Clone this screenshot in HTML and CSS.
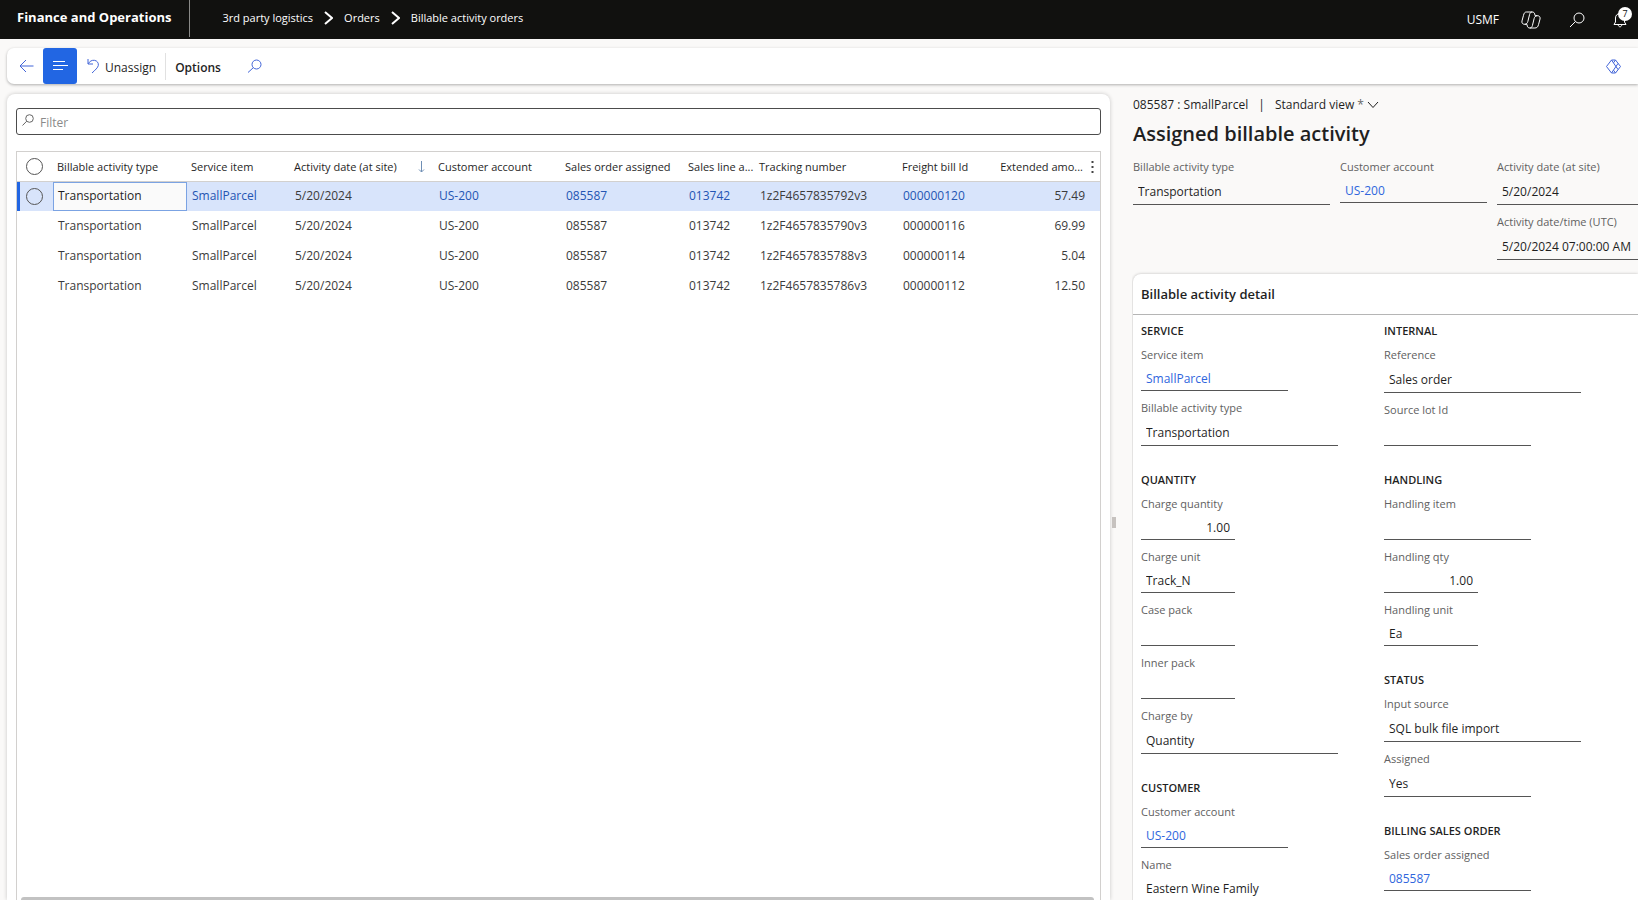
FILE: index.html
```html
<!DOCTYPE html>
<html lang="en">
<head>
    <meta charset="UTF-8">
    <meta name="viewport" content="width=device-width, initial-scale=1.0">
    <title>Billable activity orders</title>
    <link rel="stylesheet" href="styles.css">
</head>
<body>
    <header class="topbar">
        <a class="brand" href="#">Finance and Operations</a>
        <nav class="crumbs" aria-label="Breadcrumb">
            <a href="#">3rd party logistics</a>
            <svg width="9" height="14" viewBox="0 0 9 14"><path d="M1 1l7 6-7 6"/></svg>
            <a href="#">Orders</a>
            <svg width="9" height="14" viewBox="0 0 9 14"><path d="M1 1l7 6-7 6"/></svg>
            <a href="#">Billable activity orders</a>
        </nav>
        <div class="top-actions">
            <button class="company">USMF</button>
            <button aria-label="Copilot">
                <svg width="20" height="18" viewBox="0 0 20 18"><path d="M5.500 1h5.700c1.500 0 2.200.8 2.500 2l.4 1.700h2.200c2.200 0 3.200 1.500 2.700 3.400l-1.500 5.600c-.6 2.300-1.700 3.300-3.600 3.300H8.800c-1.500 0-2.200-.8-2.500-2l-.4-1.700H3.700c-2.200 0-3.200-1.500-2.700-3.400l1.500-5.600C3.100 2 3.800 1 5.500 1z"/><path d="M11.200 1C9.700 1 9 2 8.600 3.400L6.900 10.300c-.4 1.600-1.200 3-3.200 3M8.800 17c1.500 0 2.200-1 2.600-2.400l1.700-6.900c.4-1.600 1.200-3 3.200-3"/></svg>
            </button>
            <button aria-label="Search">
                <svg width="16" height="16" viewBox="0 0 16 16"><circle cx="10" cy="6" r="5"/><path d="M6.400 9.600L1 15"/></svg>
            </button>
            <button class="bell" aria-label="Notifications">
                <svg width="14" height="16" viewBox="0 0 14 16"><path d="M7 1.500C4.300 1.500 2.500 3.500 2.500 6v4L1 12.500h12L11.500 10V6C11.500 3.500 9.700 1.500 7 1.500zM5.200 13c.3 1.200 1 1.800 1.800 1.800s1.500-.6 1.800-1.800"/></svg>
                <span class="badge">7</span>
            </button>
        </div>
    </header>

    <div class="toolbar">
        <button class="back" aria-label="Back">
            <svg width="15" height="14" viewBox="0 0 15 14"><path d="M7 1L1 7l6 6M1 7h13.500"/></svg>
        </button>
        <button class="list-toggle" aria-label="Show list">
            <svg width="16" height="12" viewBox="0 0 16 12"><path d="M1 1.500h12M1 5.500h15M1 9.500h10"/></svg>
        </button>
        <button class="unassign">
            <svg width="12" height="16" viewBox="0 0 12 16"><path d="M1 1v5h5M1.200 5.800C2.600 3.200 5 2 7.400 2.300c2.800.4 4.400 2.800 3.900 5.200-.5 2.300-3 4.400-6.300 7.500"/></svg>
            Unassign
        </button>
        <span class="divider"></span>
        <button class="options">Options</button>
        <button class="find" aria-label="Search actions">
            <svg width="15" height="14" viewBox="0 0 15 14"><circle cx="9.500" cy="5.500" r="4.500"/><path d="M6.300 8.700L1 13.500"/></svg>
        </button>
        <button class="apps" aria-label="Power Apps">
            <svg width="15" height="15" viewBox="0 0 15 15"><path d="M5.500 1h4l5 6.500-5 6.500h-4L.5 7.500zM5.500 1l6.500 9.500M5.500 14L12 4.500M9.500 1L7.500 3.800M9.500 14l-2-2.800"/></svg>
        </button>
    </div>

    <main class="workspace">
        <section class="list-card">
            <div class="filter">
                <svg width="12" height="12" viewBox="0 0 12 12"><circle cx="7.500" cy="4.500" r="3.800"/><path d="M4.700 7.200L.5 11.500"/></svg>
                <input type="text" placeholder="Filter" aria-label="Filter">
            </div>
            <div class="grid-box">
                <table class="grid">
                    <colgroup>
                        <col class="c-mark"><col class="c-type"><col class="c-item"><col class="c-date"><col class="c-cust">
                        <col class="c-order"><col class="c-line"><col class="c-track"><col class="c-freight"><col class="c-amount">
                    </colgroup>
                    <thead>
                        <tr>
                            <th><input type="checkbox" aria-label="Select all rows"></th>
                            <th>Billable activity type</th>
                            <th>Service item</th>
                            <th>
                                <div class="sorted">Activity date (at site)
                                    <svg width="7" height="12" viewBox="0 0 7 12"><path d="M3.500 0v11M1 8.500l2.500 2.500L6 8.500"/></svg>
                                </div>
                            </th>
                            <th>Customer account</th>
                            <th>Sales order assigned</th>
                            <th>Sales line a...</th>
                            <th>Tracking number</th>
                            <th>Freight bill Id</th>
                            <th>
                                <div class="amount-head">Extended amo...
                                    <button aria-label="Grid options"><svg width="3" height="12" viewBox="0 0 3 12"><path d="M.5 0h2v2h-2zM.5 5h2v2h-2zM.5 10h2v2h-2z"/></svg></button>
                                </div>
                            </th>
                        </tr>
                    </thead>
                    <tbody>
                        <tr class="selected">
                            <td><input type="checkbox" aria-label="Select row"></td>
                            <td class="active">Transportation</td>
                            <td><a href="#">SmallParcel</a></td>
                            <td>5/20/2024</td>
                            <td><a href="#">US-200</a></td>
                            <td><a href="#">085587</a></td>
                            <td><a href="#">013742</a></td>
                            <td>1z2F4657835792v3</td>
                            <td><a href="#">000000120</a></td>
                            <td class="num">57.49</td>
                        </tr>
                        <tr>
                            <td></td>
                            <td>Transportation</td>
                            <td>SmallParcel</td>
                            <td>5/20/2024</td>
                            <td>US-200</td>
                            <td>085587</td>
                            <td>013742</td>
                            <td>1z2F4657835790v3</td>
                            <td>000000116</td>
                            <td class="num">69.99</td>
                        </tr>
                        <tr>
                            <td></td>
                            <td>Transportation</td>
                            <td>SmallParcel</td>
                            <td>5/20/2024</td>
                            <td>US-200</td>
                            <td>085587</td>
                            <td>013742</td>
                            <td>1z2F4657835788v3</td>
                            <td>000000114</td>
                            <td class="num">5.04</td>
                        </tr>
                        <tr>
                            <td></td>
                            <td>Transportation</td>
                            <td>SmallParcel</td>
                            <td>5/20/2024</td>
                            <td>US-200</td>
                            <td>085587</td>
                            <td>013742</td>
                            <td>1z2F4657835786v3</td>
                            <td>000000112</td>
                            <td class="num">12.50</td>
                        </tr>
                    </tbody>
                </table>
                <div class="scrollbar"></div>
            </div>
        </section>

        <div class="splitter"><span></span></div>

        <section class="details">
            <div class="view-line">
                <span>085587 : SmallParcel</span>
                <span>|</span>
                <button>Standard view <span class="star">*</span>
                    <svg width="12" height="8" viewBox="0 0 12 8"><path d="M1 1l5 5.500L11 1"/></svg>
                </button>
            </div>
            <h1>Assigned billable activity</h1>

            <div class="summary">
                <div class="field wide enum">
                    <label for="s-type">Billable activity type</label>
                    <input id="s-type" type="text" value="Transportation" readonly>
                </div>
                <div class="field medium">
                    <span class="label" id="s-cust">Customer account</span>
                    <a href="#" aria-describedby="s-cust">US-200</a>
                </div>
                <div class="stack">
                    <div class="field wide enum">
                        <label for="s-date">Activity date (at site)</label>
                        <input id="s-date" type="text" value="5/20/2024" readonly>
                    </div>
                    <div class="field wide enum">
                        <label for="s-utc">Activity date/time (UTC)</label>
                        <input id="s-utc" type="text" value="5/20/2024 07:00:00 AM" readonly>
                    </div>
                </div>
            </div>

            <div class="detail-card">
                <h2>Billable activity detail</h2>
                <div class="columns">
                    <div class="column">
                        <div class="group">
                            <h3>SERVICE</h3>
                            <div class="field medium">
                                <span class="label" id="d-item">Service item</span>
                                <a href="#" aria-describedby="d-item">SmallParcel</a>
                            </div>
                            <div class="field wide enum">
                                <label for="d-type">Billable activity type</label>
                                <input id="d-type" type="text" value="Transportation" readonly>
                            </div>
                        </div>
                        <div class="group">
                            <h3>QUANTITY</h3>
                            <div class="field narrow">
                                <label for="d-qty">Charge quantity</label>
                                <input id="d-qty" class="num" type="text" value="1.00" readonly>
                            </div>
                            <div class="field narrow">
                                <label for="d-unit">Charge unit</label>
                                <input id="d-unit" type="text" value="Track_N" readonly>
                            </div>
                            <div class="field narrow">
                                <label for="d-case">Case pack</label>
                                <input id="d-case" type="text" readonly>
                            </div>
                            <div class="field narrow">
                                <label for="d-inner">Inner pack</label>
                                <input id="d-inner" type="text" readonly>
                            </div>
                            <div class="field wide enum">
                                <label for="d-by">Charge by</label>
                                <input id="d-by" type="text" value="Quantity" readonly>
                            </div>
                        </div>
                        <div class="group">
                            <h3>CUSTOMER</h3>
                            <div class="field medium">
                                <span class="label" id="d-cust">Customer account</span>
                                <a href="#" aria-describedby="d-cust">US-200</a>
                            </div>
                            <div class="field wide">
                                <label for="d-name">Name</label>
                                <input id="d-name" type="text" value="Eastern Wine Family" readonly>
                            </div>
                        </div>
                    </div>
                    <div class="column">
                        <div class="group">
                            <h3>INTERNAL</h3>
                            <div class="field wide enum">
                                <label for="d-ref">Reference</label>
                                <input id="d-ref" type="text" value="Sales order" readonly>
                            </div>
                            <div class="field medium">
                                <label for="d-lot">Source lot Id</label>
                                <input id="d-lot" type="text" readonly>
                            </div>
                        </div>
                        <div class="group">
                            <h3>HANDLING</h3>
                            <div class="field medium">
                                <label for="d-hitem">Handling item</label>
                                <input id="d-hitem" type="text" readonly>
                            </div>
                            <div class="field narrow">
                                <label for="d-hqty">Handling qty</label>
                                <input id="d-hqty" class="num" type="text" value="1.00" readonly>
                            </div>
                            <div class="field narrow">
                                <label for="d-hunit">Handling unit</label>
                                <input id="d-hunit" type="text" value="Ea" readonly>
                            </div>
                        </div>
                        <div class="group">
                            <h3>STATUS</h3>
                            <div class="field wide enum">
                                <label for="d-src">Input source</label>
                                <input id="d-src" type="text" value="SQL bulk file import" readonly>
                            </div>
                            <div class="field medium enum">
                                <label for="d-asg">Assigned</label>
                                <input id="d-asg" type="text" value="Yes" readonly>
                            </div>
                        </div>
                        <div class="group">
                            <h3>BILLING SALES ORDER</h3>
                            <div class="field medium">
                                <span class="label" id="d-so">Sales order assigned</span>
                                <a href="#" aria-describedby="d-so">085587</a>
                            </div>
                        </div>
                    </div>
                </div>
            </div>
        </section>
    </main>
</body>
</html>
```
FILE: styles.css
```css
* {
    box-sizing: border-box;
}
body {
    margin: 0;
    height: 100vh;
    overflow: hidden;
    display: flex;
    flex-direction: column;
    background: #faf9f8;
    color: #1f1f1f;
    font-family: "Open Sans", "Noto Sans", sans-serif;
    font-size: 12px;
}
button {
    display: flex;
    align-items: center;
    padding: 0;
    border: none;
    background: none;
    color: inherit;
    font: inherit;
    cursor: pointer;
}
input {
    font: inherit;
    color: inherit;
}
a {
    text-decoration: none;
}
svg {
    display: block;
    flex: none;
    fill: none;
    stroke: currentColor;
}

/* Top bar */
.topbar {
    flex: none;
    display: flex;
    align-items: center;
    height: 39px;
    background: #11110f;
    color: #fff;
}
.topbar a {
    color: #fff;
}
.brand {
    height: 37px;
    align-self: flex-start;
    padding: 0 18px 0 17px;
    border-right: 1px solid #8a8a88;
    font-size: 13px;
    font-weight: 700;
    line-height: 34px;
}
.crumbs {
    display: flex;
    align-items: center;
    gap: 11px;
    padding: 0 0 4px 32px;
    font-size: 11px;
}
.crumbs svg {
    stroke-width: 2;
}
.top-actions {
    display: flex;
    align-items: center;
    margin-left: auto;
    gap: 28px;
    padding-right: 11px;
}
.company {
    margin-right: -6px;
}
.bell {
    position: relative;
}
.badge {
    position: absolute;
    top: -5px;
    left: 5px;
    width: 14px;
    height: 14px;
    border-radius: 50%;
    background: #fff;
    color: #11110f;
    font-size: 9px;
    line-height: 14px;
    text-align: center;
}

/* Action pane */
.toolbar {
    flex: none;
    display: flex;
    align-items: center;
    height: 36px;
    margin: 9px 0 10px 7px;
    border-radius: 7px 0 0 7px;
    background: #fff;
    box-shadow: 0 1px 3px rgba(0,0,0,0.3);
}
.toolbar svg {
    color: #4164d8;
}
.back {
    padding: 0 9px 0 12px;
}
.list-toggle {
    justify-content: center;
    width: 34px;
    height: 36px;
    border-radius: 3px;
    background: #2266e3;
}
.toolbar .list-toggle svg {
    color: #fff;
}
.unassign {
    gap: 6px;
    padding: 2px 9px 0 10px;
}
.unassign svg {
    margin-bottom: 2px;
}
.divider {
    width: 1px;
    height: 27px;
    background: #e1e1e1;
}
.options {
    padding: 2px 26px 0 9px;
    font-weight: 600;
}
.apps {
    margin-left: auto;
    padding-right: 17px;
}

/* Workspace */
.workspace {
    flex: 1;
    min-height: 0;
    display: grid;
    grid-template-columns: minmax(0, 1fr) 22px 506px;
    grid-template-rows: minmax(0, 1fr);
    padding-left: 7px;
}
.list-card {
    display: flex;
    flex-direction: column;
    padding: 14px 9px 0;
    border-radius: 8px 8px 0 0;
    background: #fff;
    box-shadow: 0 0 4px rgba(0,0,0,0.2);
}
.filter {
    flex: none;
    display: flex;
    align-items: center;
    gap: 6px;
    height: 27px;
    padding: 0 5px;
    border: 1px solid #4c4c4c;
    border-radius: 3px;
    color: #666;
}
.filter svg {
    margin-bottom: 4px;
}
.filter input {
    flex: 1;
    padding: 2px 0 0;
    border: none;
    outline: none;
    background: none;
}
.filter input::placeholder {
    color: #8a8a8a;
}

/* Grid */
.grid-box {
    flex: 1;
    display: flex;
    flex-direction: column;
    margin-top: 16px;
    border: 1px solid #d2d0ce;
    border-bottom: none;
}
.grid {
    width: 100%;
    table-layout: fixed;
    border-collapse: separate;
    border-spacing: 0;
}
.c-mark { width: 36px; }
.c-type { width: 134px; }
.c-item { width: 103px; }
.c-date { width: 144px; }
.c-cust { width: 127px; }
.c-order { width: 123px; }
.c-line { width: 71px; }
.c-track { width: 143px; }
.c-freight { width: 98px; }
.c-amount { width: 104px; }
.grid th {
    height: 30px;
    padding: 0 0 0 4px;
    border-bottom: 1px solid #d2d0ce;
    font-size: 11px;
    font-weight: 400;
    text-align: left;
    white-space: nowrap;
}
.grid td {
    height: 30px;
    padding: 0 5px 2px;
    color: #3b3b3b;
}
.grid th:first-child,
.grid td:first-child {
    padding: 0;
}
.grid input {
    appearance: none;
    display: block;
    width: 17px;
    height: 17px;
    margin: 0 0 0 9px;
    border: 1px solid #555;
    border-radius: 50%;
}
.sorted {
    display: flex;
    align-items: center;
    justify-content: space-between;
    padding-right: 9px;
}
.sorted svg {
    color: #6f8fb5;
}
.amount-head {
    display: flex;
    align-items: center;
    justify-content: flex-end;
    gap: 8px;
    padding-right: 6px;
}
.amount-head svg {
    fill: #444;
    stroke: none;
}
.grid .selected td {
    height: 29px;
    background: #d8e4fb;
}
.grid .selected td:first-child {
    border-left: 3px solid #2266e3;
}
.grid .selected td:first-child input {
    margin-left: 6px;
}
.grid .selected td.active {
    padding: 0 4px 2px;
    border: 1px solid #7ba3e3;
    background: #fafafa;
    color: #1f1f1f;
}
.grid .selected a {
    color: #2455b3;
}
.grid td.num {
    padding-right: 15px;
    text-align: right;
}
.scrollbar {
    height: 3px;
    margin: auto 6px 0 4px;
    border-radius: 3px 3px 0 0;
    background: #c2c2c2;
}
.splitter {
    display: flex;
    align-items: center;
    padding: 50px 0 0 2px;
}
.splitter span {
    width: 4px;
    height: 11px;
    background: #c6c2bf;
}

/* Details panel */
.details {
    overflow: hidden;
    padding-left: 1px;
    white-space: nowrap;
}
.view-line {
    display: flex;
    align-items: center;
    height: 21px;
    gap: 10px;
}
.view-line button {
    gap: 3px;
}
.star {
    color: #666;
}
h1 {
    margin: 4px 0 9px;
    font-size: 20px;
    font-weight: 600;
    line-height: 30px;
}
.summary {
    display: flex;
    gap: 10px;
}
.stack {
    flex: none;
}
.field {
    display: flex;
    flex-direction: column;
    flex: none;
    margin-bottom: 8px;
}
.field label,
.field .label {
    color: #616161;
    font-size: 11px;
    line-height: 18px;
}
.field input,
.field a {
    width: 100%;
    height: 27px;
    padding: 3px 5px 0;
    border: none;
    border-bottom: 1px solid #555;
    outline: none;
    background: none;
    line-height: 23px;
}
.field a {
    color: #2f66dd;
}
.enum input {
    height: 29px;
}
.field .num {
    text-align: right;
}
.narrow { width: 94px; }
.medium { width: 147px; }
.wide { width: 197px; }
.detail-card {
    min-height: 100%;
    margin-top: 6px;
    border-radius: 8px 0 0 0;
    background: #fff;
    box-shadow: 0 0 3px rgba(0,0,0,0.25);
}
h2 {
    height: 41px;
    margin: 0;
    padding-left: 8px;
    border-bottom: 1px solid #b5b5b5;
    font-size: 13px;
    font-weight: 600;
    line-height: 41px;
}
.columns {
    display: flex;
    gap: 46px;
    padding: 7px 8px;
}
.group {
    margin-bottom: 25px;
}
h3 {
    margin: 0 0 6px;
    font-size: 11px;
    font-weight: 600;
    line-height: 18px;
}
```
